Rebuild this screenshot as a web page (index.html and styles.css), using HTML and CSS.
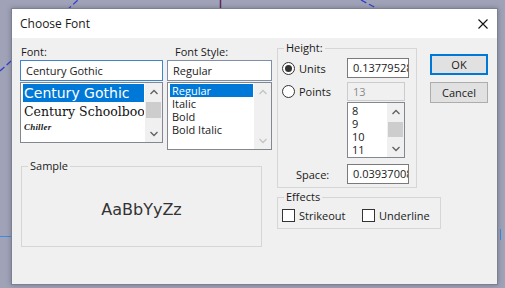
FILE: index.html
```html
<!DOCTYPE html>
<html>
<head>
<meta charset="utf-8">
<title>Choose Font</title>
<link rel="stylesheet" href="styles.css">
</head>
<body>
<svg class="canvas" width="505" height="288" viewBox="0 0 505 288">
  <line class="dash" x1="0" y1="71" x2="78" y2="0"/>
  <line class="dash" x1="361" y1="0" x2="378" y2="9"/>
  <line class="mag" x1="220.5" y1="0" x2="220.5" y2="9"/>
  <line class="tick" x1="0" y1="236.5" x2="11" y2="236.5"/>
  <line class="tick" x1="500.5" y1="229" x2="500.5" y2="240"/>
</svg>
<div class="dialog">
  <div class="titlebar">
    <span class="title">Choose Font</span>
    <svg class="close" width="10" height="10" viewBox="0 0 10 10"><path d="M0.5 0.5 L9.5 9.5 M9.5 0.5 L0.5 9.5"/></svg>
  </div>
  <div class="content">
    <div class="left">
      <div class="toprow">
        <div class="font-col">
          <div class="label">Font:</div>
          <div class="textbox focus">Century Gothic</div>
          <div class="list font-list">
            <div class="items">
              <div class="item sel gothic">Century Gothic</div>
              <div class="item school">Century Schoolbook</div>
              <div class="item chiller">Chiller</div>
            </div>
            <div class="sb">
              <div class="arrow"><svg width="8" height="6" viewBox="0 0 8 6"><polyline points="0.5,5 4,1.5 7.5,5"/></svg></div>
              <div class="track"><div class="thumb t16"></div></div>
              <div class="arrow"><svg width="8" height="6" viewBox="0 0 8 6"><polyline points="0.5,1 4,4.5 7.5,1"/></svg></div>
            </div>
          </div>
        </div>
        <div class="style-col">
          <div class="label">Font Style:</div>
          <div class="textbox plain">Regular</div>
          <div class="list style-list">
            <div class="items">
              <div class="item row13 sel">Regular</div>
              <div class="item row13">Italic</div>
              <div class="item row13">Bold</div>
              <div class="item row13">Bold Italic</div>
            </div>
            <div class="sb disabled">
              <div class="arrow"><svg width="8" height="6" viewBox="0 0 8 6"><polyline points="0.5,5 4,1.5 7.5,5"/></svg></div>
              <div class="track"></div>
              <div class="arrow"><svg width="8" height="6" viewBox="0 0 8 6"><polyline points="0.5,1 4,4.5 7.5,1"/></svg></div>
            </div>
          </div>
        </div>
      </div>
      <fieldset class="group sample">
        <legend>Sample</legend>
        <div class="sample-body">AaBbYyZz</div>
      </fieldset>
    </div>
    <div class="right">
      <div class="right-top">
        <fieldset class="group height-group">
          <legend>Height:</legend>
          <div class="hrow units">
            <div class="lab"><span class="radio"><span class="dot"></span></span><span>Units</span></div>
            <div class="textbox w62">0.13779528</div>
          </div>
          <div class="hrow points">
            <div class="lab"><span class="radio"></span><span>Points</span></div>
            <div class="textbox w58 disabled-box">13</div>
          </div>
          <div class="list size-list">
            <div class="items">
              <div class="item row13">8</div>
              <div class="item row13">9</div>
              <div class="item row13">10</div>
              <div class="item row13">11</div>
            </div>
            <div class="sb">
              <div class="arrow"><svg width="8" height="6" viewBox="0 0 8 6"><polyline points="0.5,5 4,1.5 7.5,5"/></svg></div>
              <div class="track"><div class="thumb t15"></div></div>
              <div class="arrow"><svg width="8" height="6" viewBox="0 0 8 6"><polyline points="0.5,1 4,4.5 7.5,1"/></svg></div>
            </div>
          </div>
          <div class="hrow space">
            <div class="lab space-lab">Space:</div>
            <div class="textbox w62">0.03937008</div>
          </div>
        </fieldset>
        <div class="buttons">
          <div class="btn default">OK</div>
          <div class="btn">Cancel</div>
        </div>
      </div>
      <fieldset class="group effects">
        <legend>Effects</legend>
        <div class="effrow">
          <div class="chk-item first"><span class="checkbox"></span><span>Strikeout</span></div>
          <div class="chk-item"><span class="checkbox"></span><span>Underline</span></div>
        </div>
      </fieldset>
    </div>
  </div>
</div>
</body>
</html>
```

FILE: styles.css
```css
* { box-sizing: border-box; }
html, body { margin: 0; padding: 0; }
body {
  width: 505px;
  height: 288px;
  background: #a0a3b8;
  position: relative;
  overflow: hidden;
  font-family: "Open Sans", "Noto Sans", sans-serif;
  font-size: 11px;
  color: #1a1a1a;
}
.canvas { position: absolute; left: 0; top: 0; }
.dash { stroke: #2f3fd0; stroke-width: 1.3; stroke-dasharray: 6 3; }
.mag { stroke: #5c2a60; stroke-width: 1.5; }
.tick { stroke: #3d8be0; stroke-width: 1; }

.dialog {
  position: absolute;
  left: 11px;
  top: 8px;
  width: 487px;
  height: 277px;
  border: 1px solid #7d808e;
  background: #f0f0f0;
  box-shadow: 0 0 5px rgba(40, 40, 60, 0.35);
  display: flex;
  flex-direction: column;
}
.titlebar {
  height: 29px;
  flex: none;
  background: #fff;
  display: flex;
  align-items: center;
  justify-content: space-between;
  padding: 0 9px 0 8px;
}
.title { font-size: 12px; color: #1a1a1a; }
.close { display: block; }
.close path { stroke: #111; stroke-width: 1.1; fill: none; }

.content {
  flex: 1;
  display: flex;
  gap: 5px;
  padding: 3px 0 0 8px;
}
.left {
  width: 252px;
  margin-top: 4px;
  display: flex;
  flex-direction: column;
}
.toprow { display: flex; gap: 4px; align-items: flex-start; }
.font-col { width: 143px; }
.style-col { width: 105px; }
.label { line-height: 13px; padding-bottom: 2px; padding-left: 1px; }
.style-col .label { padding-left: 8px; }

.textbox {
  height: 21px;
  background: #fff;
  border: 1px solid #7a7a7a;
  padding: 0 5px;
  line-height: 19px;
  white-space: nowrap;
  overflow: hidden;
}
.textbox.focus { border-color: #3d86cc; }
.textbox.plain { border-color: #7d90a8; }
.textbox.w62 { width: 62px; height: 20px; line-height: 18px; }
.textbox.w58 { width: 58px; height: 19px; line-height: 17px; }
.textbox.disabled-box { background: #f0f0f0; border-color: #cccccc; color: #8a8a8a; }

.list {
  margin-top: 1px;
  display: flex;
  background: #fff;
  border: 1px solid #828790;
  overflow: hidden;
}
.font-list { height: 61px; }
.style-list { height: 68px; }
.items { flex: 1; min-width: 0; padding: 1px 1px 0 2px; overflow: hidden; }
.item { white-space: nowrap; overflow: hidden; }
.sel { background: #0078d7; color: #fff; }
.gothic { font-family: "DejaVu Sans", sans-serif; font-size: 14px; line-height: 18px; padding-left: 1px; }
.school { font-family: "DejaVu Serif", serif; font-size: 12.5px; line-height: 19px; padding-left: 1px; color: #111; }
.chiller { font-family: "Liberation Serif", serif; font-size: 9px; font-weight: bold; font-style: italic; line-height: 13px; padding-left: 1px; letter-spacing: 0.2px; }
.row13 { line-height: 13px; padding-left: 2px; }

.sb {
  width: 17px;
  flex: none;
  background: #f0f0f0;
  display: flex;
  flex-direction: column;
}
.arrow { height: 17px; flex: none; display: flex; align-items: center; justify-content: center; }
.arrow svg { display: block; }
.arrow polyline { fill: none; stroke: #606060; stroke-width: 1.3; }
.sb.disabled .arrow polyline { stroke: #c4c4c4; }
.track { flex: 1; padding: 2px 1px 0; }
.thumb { background: #cdcdcd; }
.t16 { height: 16px; }
.t15 { height: 15px; }

.group { margin: 0; padding: 0; border: 1px solid #d6d6d6; min-width: 0; }
.group legend { padding: 0 2px; line-height: 14px; font-size: 11px; }

.sample { width: 241px; margin: 9px 0 0 1px; }
.sample legend { margin-left: 6px; }
.sample-body {
  height: 73px;
  display: flex;
  align-items: center;
  justify-content: center;
  font-family: "DejaVu Sans", sans-serif;
  font-size: 16px;
  color: #333;
}

.right { display: flex; flex-direction: column; }
.right-top { display: flex; gap: 13px; align-items: flex-start; }
.height-group { width: 140px; padding: 3px 7px 3px 4px; }
.height-group legend { margin-left: 2px; }
.hrow { display: flex; align-items: center; }
.lab { width: 65px; display: flex; align-items: center; gap: 4px; }
.units { height: 20px; }
.points { height: 19px; margin-top: 4px; }
.size-list { margin: 1px 0 0 65px; width: 58px; height: 56px; }
.space { height: 20px; margin-top: 6px; }
.space-lab { padding-left: 14px; }

.radio {
  width: 13px;
  height: 13px;
  flex: none;
  border: 1px solid #333;
  border-radius: 50%;
  background: #fff;
  display: flex;
  align-items: center;
  justify-content: center;
}
.dot { width: 7px; height: 7px; border-radius: 50%; background: #333; }

.buttons { width: 58px; margin-top: 13px; display: flex; flex-direction: column; gap: 7px; }
.btn {
  height: 21px;
  background: #e1e1e1;
  border: 1px solid #adadad;
  display: flex;
  align-items: center;
  justify-content: center;
}
.btn.default { border: 2px solid #0078d7; }

.effects { width: 164px; margin-top: 2px; padding: 5px 4px 6px 4px; }
.effects legend { margin-left: 2px; }
.effrow { display: flex; height: 13px; align-items: center; }
.chk-item { display: flex; align-items: center; gap: 4px; }
.chk-item.first { width: 80px; }
.checkbox { width: 13px; height: 13px; flex: none; border: 1px solid #333; background: #fff; }
```
